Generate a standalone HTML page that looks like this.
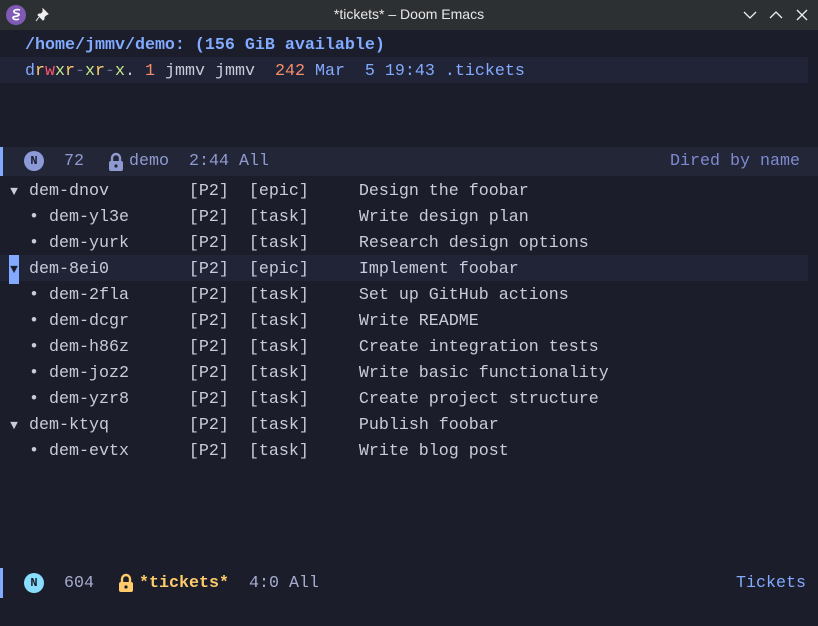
<!DOCTYPE html>
<html><head><meta charset="utf-8"><style>
*{margin:0;padding:0;box-sizing:border-box}
body{width:818px;height:626px;background:#1b1d2b;overflow:hidden;position:relative;font-family:"Liberation Mono",monospace;font-size:16.67px;color:#c8cbd9}
.tb{position:absolute;left:0;top:0;width:818px;height:30px;background:#2d3032;color:#e8e8e8;font-family:"Liberation Sans",sans-serif;font-size:14px}
.tb .t{position:absolute;left:0;right:0;top:6px;text-align:center}
.l{position:absolute;left:0;width:818px;height:26px;line-height:29px;white-space:pre}
.b{color:#82aaff}
.hl{background:#212436}
.ml{background:#232637}
.c{position:absolute;top:0;white-space:pre}
.nb{position:absolute;width:20px;height:20px;border-radius:50%;font-size:12px;font-weight:bold;text-align:center;line-height:20px;color:#1b1d2b}
.tri{font-size:13px;display:inline-block;width:10px;text-align:center;vertical-align:top}
</style></head><body>
<div class="tb">
<svg style="position:absolute;left:5px;top:4px" width="22" height="22" viewBox="0 0 22 22"><circle cx="11" cy="11" r="10" fill="#7f5ab6"/><path d="M15 6c-3-1-7 0-6 2s6 1 5 3-7 1-6 3 4 2 6 1" stroke="#fff" stroke-width="1.6" fill="none"/></svg>
<svg style="position:absolute;left:35px;top:8px" width="14" height="14" viewBox="0 0 14 14"><path d="M8 1l5 5-2 1-2 2 0 2-1 1-5-5 1-1 2 0 2-2z M4 9l-3 4" fill="#eee" stroke="#eee" stroke-width="1"/></svg>
<div class="t">*tickets* – Doom Emacs</div>
<svg style="position:absolute;left:742px;top:9px" width="66" height="12" viewBox="0 0 66 12"><path d="M2 3l6 6 6-6M28 9l6-6 6 6M55 1l10 10M65 1l-10 10" stroke="#eee" stroke-width="1.3" fill="none"/></svg>
</div>
<div class="l b" style="top:31px;font-weight:bold;padding-left:25px">/home/jmmv/demo: (156 GiB available)</div>
<div class="l hl" style="top:57px;padding-left:25px;width:808px"><span class="b">d</span><span style="color:#ffcb6b">r</span><span style="color:#ff5370">w</span><span style="color:#c3e88d">x</span><span style="color:#ffcb6b">r</span><span style="color:#676e95">-</span><span style="color:#c3e88d">x</span><span style="color:#ffcb6b">r</span><span style="color:#676e95">-</span><span style="color:#c3e88d">x</span>. <span style="color:#f78c6c">1</span> jmmv jmmv  <span style="color:#f78c6c">242</span> <span class="b">Mar  5 19:43 .tickets</span></div>
<div class="l ml" style="top:147px;height:29px;line-height:30px;border-left:3px solid #82aaff">
<div class="nb" style="left:21px;top:4px;background:#8d9ad8;line-height:20px">N</div>
<span class="c" style="left:61px;color:#8f9bd0">72</span>
<svg style="position:absolute;left:104px;top:5px" width="18" height="20" viewBox="0 0 18 20"><path d="M5 9V6a4 4 0 0 1 8 0v3" stroke="#8f9bd0" stroke-width="2.4" fill="none"/><rect x="2" y="9" width="14" height="10" rx="2" fill="#8f9bd0"/><circle cx="9" cy="14" r="1.6" fill="#232637"/></svg>
<span class="c" style="left:126px;color:#8f9bd0">demo  2:44 All</span>
<span class="c" style="left:667px;color:#7e8ad0">Dired by name</span>
</div>
<div class="l" style="top:177px;padding-left:9px"><span class="tri">▼</span> dem-dnov        [P2]  [epic]     Design the foobar</div>
<div class="l" style="top:203px;padding-left:9px">  • dem-yl3e      [P2]  [task]     Write design plan</div>
<div class="l" style="top:229px;padding-left:9px">  • dem-yurk      [P2]  [task]     Research design options</div>
<div class="l hl" style="top:255px;padding-left:9px;width:808px"><span class="tri" style="background:#82aaff;color:#1b1d2b">▼</span> dem-8ei0        [P2]  [epic]     Implement foobar</div>
<div class="l" style="top:281px;padding-left:9px">  • dem-2fla      [P2]  [task]     Set up GitHub actions</div>
<div class="l" style="top:307px;padding-left:9px">  • dem-dcgr      [P2]  [task]     Write README</div>
<div class="l" style="top:333px;padding-left:9px">  • dem-h86z      [P2]  [task]     Create integration tests</div>
<div class="l" style="top:359px;padding-left:9px">  • dem-joz2      [P2]  [task]     Write basic functionality</div>
<div class="l" style="top:385px;padding-left:9px">  • dem-yzr8      [P2]  [task]     Create project structure</div>
<div class="l" style="top:411px;padding-left:9px"><span class="tri">▼</span> dem-ktyq        [P2]  [task]     Publish foobar</div>
<div class="l" style="top:437px;padding-left:9px">  • dem-evtx      [P2]  [task]     Write blog post</div>
<div class="l ml" style="top:568px;height:30px;line-height:32px;border-left:3px solid #82aaff;background:#1b1d2b">
<div class="nb" style="left:21px;top:5px;background:#89ddff;line-height:20px">N</div>
<span class="c" style="left:61px;color:#a6accd">604</span>
<svg style="position:absolute;left:114px;top:5px" width="18" height="20" viewBox="0 0 18 20"><path d="M5 9V6a4 4 0 0 1 8 0v3" stroke="#ffcb6b" stroke-width="2.4" fill="none"/><rect x="2" y="9" width="14" height="10" rx="2" fill="#ffcb6b"/><circle cx="9" cy="14" r="1.6" fill="#1b1d2b"/></svg>
<span class="c" style="left:136px;color:#ffcb6b;font-weight:bold">*tickets*</span>
<span class="c" style="left:246px;color:#a6accd">4:0 All</span>
<span class="c" style="left:733px;color:#82aaff">Tickets</span>
</div>
</body></html>
